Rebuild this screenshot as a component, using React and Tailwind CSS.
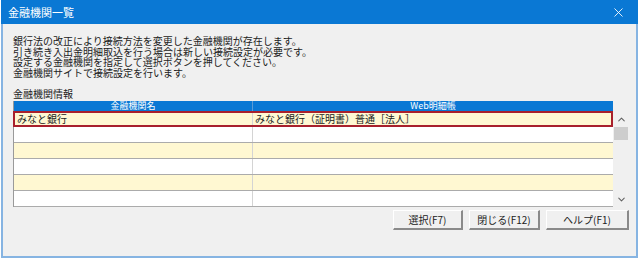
import { X, ChevronUp, ChevronDown } from 'lucide-react'

const FONT = { fontFamily: '"Noto Sans CJK JP", "Noto Sans", sans-serif' }

const MESSAGE = [
  '銀行法の改正により接続方法を変更した金融機関が存在します。',
  '引き続き入出金明細取込を行う場合は新しい接続設定が必要です。',
  '設定する金融機関を指定して選択ボタンを押してください。',
  '金融機関サイトで接続設定を行います。',
]

const ROWS = [
  { name: 'みなと銀行', web: 'みなと銀行（証明書）普通［法人］' },
  { name: '', web: '' },
  { name: '', web: '' },
  { name: '', web: '' },
  { name: '', web: '' },
  { name: '', web: '' },
]

function Btn({ label, w }) {
  return (
    <button
      type="button"
      className={`h-[20px] ${w} bg-[#f0f0f0] border-t border-l border-t-white border-l-white border-r-2 border-b-2 border-r-[#8a8a8a] border-b-[#8a8a8a] text-[10px] leading-none text-[#222]`}
    >
      {label}
    </button>
  )
}

export default function App() {
  return (
    <div className="w-[642px] h-[261px] bg-white" style={FONT}>
      <div className="ml-[1px] w-[637px] h-[258px] flex flex-col border-x-2 border-b-2 border-[#86b4e2]">
        {/* title bar */}
        <div className="h-[24px] -mx-[2px] bg-[#0a78d4] flex items-center justify-between pl-[7px] pr-[12px]">
          <span className="text-[11px] text-white leading-none">金融機関一覧</span>
          <X size={15} strokeWidth={1.4} className="text-white" />
        </div>

        {/* body */}
        <div className="flex-1 bg-[#f0f0f0] pl-[10px] pr-[7px] pt-[12px]">
          <div className="text-[10px] leading-[10.5px] text-[#222]">
            {MESSAGE.map((line) => (
              <div key={line} className="h-[10.5px] overflow-visible">{line}</div>
            ))}
          </div>

          <div className="mt-[11px] text-[10px] leading-[10px] text-[#222]">金融機関情報</div>

          <div className="mt-[2px] flex">
            <div className="w-[600px] border-l border-[#9a9a9a]">
              {/* header */}
              <div className="flex h-[10px] bg-[#0a78d4] text-[9px] leading-[10px] text-white">
                <div className="w-[239px] text-center border-r border-[#5b9bd5]">金融機関名</div>
                <div className="flex-1 text-center">Web明細帳</div>
              </div>
              {ROWS.map((r, i) => (
                <div
                  key={i}
                  className={`flex h-[16px] text-[10px] leading-[12px] text-[#222] ${
                    i % 2 === 0 ? 'bg-[#fff8d2]' : 'bg-white'
                  } ${i === 0 ? 'border-2 border-[#a8202c] -ml-[1px]' : 'border-b border-[#ababab]'}`}
                >
                  <div className={`${i === 0 ? 'w-[238px]' : 'w-[239px]'} pl-[2px] flex items-center border-r border-[#d4d4d4]`}>
                    {r.name}
                  </div>
                  <div className="flex-1 pl-[2px] flex items-center">{r.web}</div>
                </div>
              ))}
            </div>

            {/* scrollbar */}
            <div className="w-[16px] pt-[10px] flex flex-col">
              <div className="flex-1 flex flex-col bg-[#f0f0f0]">
                <div className="h-[16px] flex items-center justify-center text-[#606060]">
                  <ChevronUp size={11} strokeWidth={2.2} />
                </div>
                <div className="mx-[1px] h-[13px] bg-[#cdcdcd]" />
                <div className="flex-1" />
                <div className="h-[16px] flex items-center justify-center text-[#606060]">
                  <ChevronDown size={11} strokeWidth={2.2} />
                </div>
              </div>
            </div>
          </div>

          {/* buttons */}
          <div className="mt-[3px] flex justify-end gap-[6px]">
            <Btn label="選択(F7)" w="w-[70px]" />
            <Btn label="閉じる(F12)" w="w-[71px]" />
            <Btn label="ヘルプ(F1)" w="w-[83px]" />
          </div>
        </div>
      </div>
    </div>
  )
}
